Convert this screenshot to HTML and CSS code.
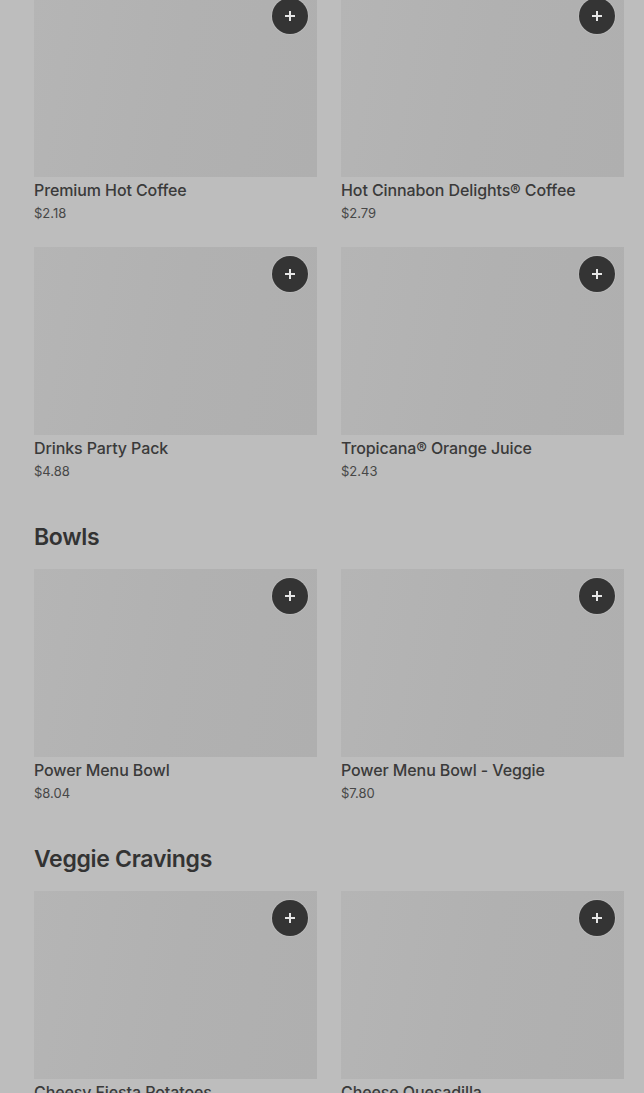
FILE: index.html
```
<!DOCTYPE html>
<html lang="en">
<head>
    <meta charset="UTF-8">
    <meta name="viewport" content="width=device-width, initial-scale=1.0">
    <title>Menu</title>
    <link rel="stylesheet" href="styles.css">
</head>
<body>
    <div class="menu">
        <section class="section first">
            <div class="grid">
                <div class="item">
                    <div class="photo"><button class="add"><svg viewBox="0 0 12 12" width="12" height="12"><path d="M6 1v10M1 6h10" stroke="#e6e6e6" stroke-width="2"/></svg></button></div>
                    <p class="name">Premium Hot Coffee</p>
                    <p class="price">$2.18</p>
                </div>
                <div class="item">
                    <div class="photo"><button class="add"><svg viewBox="0 0 12 12" width="12" height="12"><path d="M6 1v10M1 6h10" stroke="#e6e6e6" stroke-width="2"/></svg></button></div>
                    <p class="name">Hot Cinnabon Delights® Coffee</p>
                    <p class="price">$2.79</p>
                </div>
                <div class="item">
                    <div class="photo"><button class="add"><svg viewBox="0 0 12 12" width="12" height="12"><path d="M6 1v10M1 6h10" stroke="#e6e6e6" stroke-width="2"/></svg></button></div>
                    <p class="name">Drinks Party Pack</p>
                    <p class="price">$4.88</p>
                </div>
                <div class="item">
                    <div class="photo"><button class="add"><svg viewBox="0 0 12 12" width="12" height="12"><path d="M6 1v10M1 6h10" stroke="#e6e6e6" stroke-width="2"/></svg></button></div>
                    <p class="name">Tropicana® Orange Juice</p>
                    <p class="price">$2.43</p>
                </div>
            </div>
        </section>
        <section class="section">
            <h2>Bowls</h2>
            <div class="grid">
                <div class="item">
                    <div class="photo"><button class="add"><svg viewBox="0 0 12 12" width="12" height="12"><path d="M6 1v10M1 6h10" stroke="#e6e6e6" stroke-width="2"/></svg></button></div>
                    <p class="name">Power Menu Bowl</p>
                    <p class="price">$8.04</p>
                </div>
                <div class="item">
                    <div class="photo"><button class="add"><svg viewBox="0 0 12 12" width="12" height="12"><path d="M6 1v10M1 6h10" stroke="#e6e6e6" stroke-width="2"/></svg></button></div>
                    <p class="name">Power Menu Bowl - Veggie</p>
                    <p class="price">$7.80</p>
                </div>
            </div>
        </section>
        <section class="section">
            <h2>Veggie Cravings</h2>
            <div class="grid">
                <div class="item">
                    <div class="photo"><button class="add"><svg viewBox="0 0 12 12" width="12" height="12"><path d="M6 1v10M1 6h10" stroke="#e6e6e6" stroke-width="2"/></svg></button></div>
                    <p class="name">Cheesy Fiesta Potatoes</p>
                    <p class="price">$2.49</p>
                </div>
                <div class="item">
                    <div class="photo"><button class="add"><svg viewBox="0 0 12 12" width="12" height="12"><path d="M6 1v10M1 6h10" stroke="#e6e6e6" stroke-width="2"/></svg></button></div>
                    <p class="name">Cheese Quesadilla</p>
                    <p class="price">$5.19</p>
                </div>
            </div>
        </section>
    </div>
</body>
</html>
```

FILE: styles.css
```
body {
    margin: 0;
    font-family: Inter, "Liberation Sans", sans-serif;
    background-color: #bdbdbd;
    color: #3a3a3a;
    overflow: hidden;
}
.menu {
    padding: 0 20px 0 34px;
    margin-top: -11px;
}
.section {
    margin-top: 41px;
}
.section.first {
    margin-top: 0;
}
.section h2 {
    margin: 0 0 16px;
    font-family: Inter, sans-serif;
    font-size: 23px;
    line-height: 32px;
    font-weight: 600;
    letter-spacing: -0.3px;
    color: #333;
}
.grid {
    display: grid;
    grid-template-columns: 1fr 1fr;
    column-gap: 24px;
    row-gap: 25px;
}
.photo {
    position: relative;
    height: 188px;
    background: linear-gradient(100deg, #b5b5b5 0%, #b1b1b1 50%, #afafaf 100%);
}
.add {
    position: absolute;
    top: 9px;
    right: 9px;
    width: 36px;
    height: 36px;
    border: none;
    border-radius: 50%;
    background-color: #343434;
    box-shadow: 0 0 0 1px rgba(255, 255, 255, 0.12);
    display: flex;
    align-items: center;
    justify-content: center;
    padding: 0;
}
.name {
    margin: 2px 0 0;
    font-size: 16px;
    line-height: 22px;
    font-weight: 500;
    letter-spacing: -0.1px;
    color: #3a3a3a;
}
.price {
    margin: 3px 0 0;
    font-size: 13px;
    line-height: 18px;
    color: #474747;
}
```
